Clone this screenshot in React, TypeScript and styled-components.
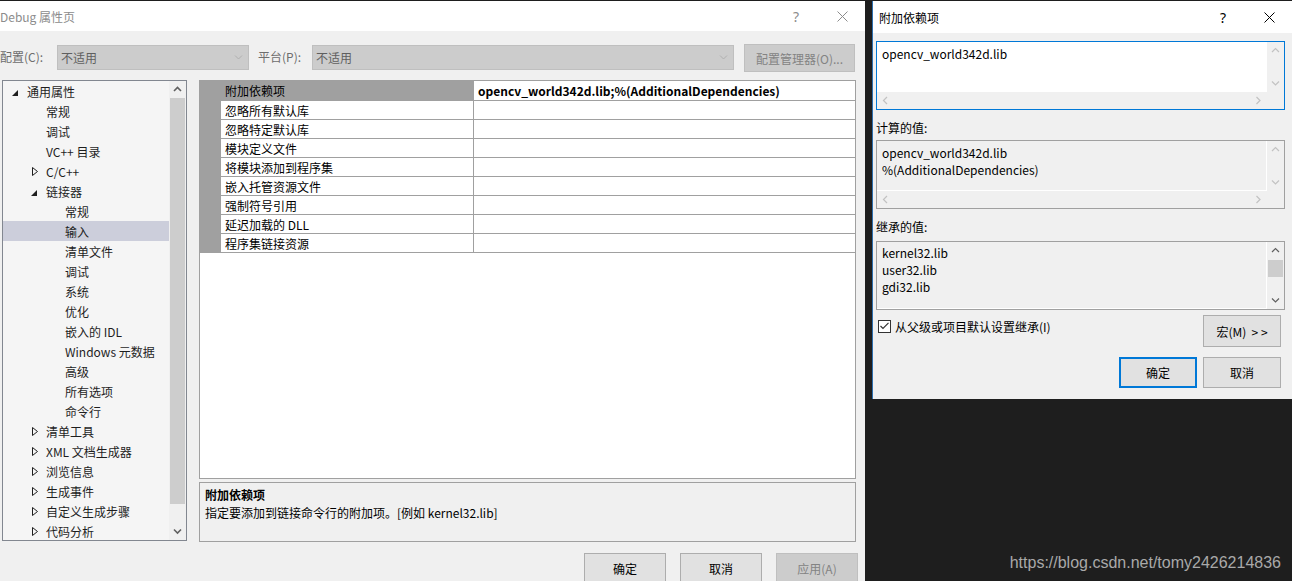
import React from "react";
import styled, { createGlobalStyle } from "styled-components";

const GlobalStyle = createGlobalStyle`
  html, body { margin: 0; padding: 0; background: #1e1e1e; }
  body {
    font-family: "Noto Sans CJK SC", "Noto Sans", sans-serif;
    font-size: 12px;
    color: #000;
  }
  * { box-sizing: border-box; }
`;

const Screen = styled.div`
  display: flex;
  gap: 7px;
  width: 1292px;
  height: 581px;
  overflow: hidden;
  background: #1e1e1e;
`;

/* ---------- shared window parts ---------- */

const TitleBar = styled.div<{ $active?: boolean; $h: number }>`
  flex: none;
  height: ${(p) => p.$h}px;
  background: #fff;
  display: flex;
  align-items: center;
  color: ${(p) => (p.$active ? "#000" : "#8c8c8c")};
`;

const TitleText = styled.div<{ $inset: number }>`
  flex: 1;
  padding-left: ${(p) => p.$inset}px;
  white-space: nowrap;
`;

const CaptionButton = styled.div`
  width: 46px;
  height: 100%;
  display: flex;
  align-items: center;
  justify-content: center;
  font-family: "Noto Sans", sans-serif;
  font-size: 14px;
`;

const PushButton = styled.div<{ $w: number; $h: number; $disabled?: boolean; $default?: boolean }>`
  flex: none;
  width: ${(p) => p.$w}px;
  height: ${(p) => p.$h}px;
  display: flex;
  align-items: center;
  justify-content: center;
  white-space: nowrap;
  background: ${(p) => (p.$disabled ? "#cccccc" : "#e1e1e1")};
  border: ${(p) => (p.$default ? "2px solid #0078d7" : p.$disabled ? "1px solid #bfbfbf" : "1px solid #adadad")};
  color: ${(p) => (p.$disabled ? "#838383" : "#000")};
`;

type Dir = "up" | "down" | "left" | "right";

const Chevron = ({ dir, color, w = 1.2 }: { dir: Dir; color: string; w?: number }) => {
  const vertical = dir === "up" || dir === "down";
  const pts = {
    up: "1,5 4.5,1.5 8,5",
    down: "1,1.5 4.5,5 8,1.5",
    left: "5,1 1.5,4.5 5,8",
    right: "1.5,1 5,4.5 1.5,8",
  }[dir];
  return (
    <svg width={vertical ? 9 : 7} height={vertical ? 7 : 9} viewBox={vertical ? "0 0 9 7" : "0 0 7 9"}>
      <polyline points={pts} fill="none" stroke={color} strokeWidth={w} />
    </svg>
  );
};

const CloseGlyph = ({ color }: { color: string }) => (
  <svg width="11" height="11" viewBox="0 0 11 11">
    <path d="M0.5 0.5 L10.5 10.5 M10.5 0.5 L0.5 10.5" stroke={color} strokeWidth="1" fill="none" />
  </svg>
);

/* ---------- left window ---------- */

const PropWindow = styled.div`
  flex: none;
  width: 865px;
  height: 580px;
  margin-top: 1px;
  background: #f0f0f0;
  display: flex;
  flex-direction: column;
`;

const Toolbar = styled.div`
  display: flex;
  align-items: flex-start;
  height: 28px;
  margin-top: 13px;
`;

const FieldLabel = styled.span<{ $w: number; $ml?: number }>`
  flex: none;
  width: ${(p) => p.$w}px;
  margin-left: ${(p) => p.$ml ?? 0}px;
  margin-top: 4px;
  line-height: 17px;
  color: #6d6d6d;
  white-space: nowrap;
`;

const Combo = styled.div<{ $w: number }>`
  flex: none;
  width: ${(p) => p.$w}px;
  height: 25px;
  margin-top: 1px;
  background: #cccccc;
  border: 1px solid #bfbfbf;
  display: flex;
  align-items: center;
  justify-content: space-between;
  padding: 0 5px 1px 3px;
  color: #5f5f5f;
`;

const ToolButton = styled(PushButton)`
  margin-left: 10px;
`;

const Main = styled.div`
  display: flex;
  align-items: flex-start;
  margin-top: 8px;
  padding-left: 2px;
`;

const Tree = styled.div`
  flex: none;
  width: 185px;
  height: 461px;
  border: 1px solid #828790;
  background: #f5f5f5;
  display: flex;
  overflow: hidden;
`;

const TreeList = styled.div`
  flex: 1;
  overflow: hidden;
`;

const TreeRow = styled.div<{ $level: number; $selected?: boolean }>`
  height: 20px;
  display: flex;
  align-items: center;
  padding-left: ${(p) => 8 + p.$level * 19}px;
  background: ${(p) => (p.$selected ? "#cccedb" : "transparent")};
  color: #1e1e1e;
  white-space: nowrap;
`;

const Expander = styled.span<{ $open?: boolean }>`
  flex: none;
  width: 16px;
  display: flex;
  align-items: center;
  padding-left: ${(p) => (p.$open ? 1 : 2)}px;
  padding-top: ${(p) => (p.$open ? 3 : 1)}px;
`;

const VScroll = styled.div`
  flex: none;
  width: 17px;
  background: #f0f0f0;
  display: flex;
  flex-direction: column;
`;

const ScrollArrow = styled.div<{ $h?: number }>`
  flex: none;
  height: ${(p) => p.$h ?? 17}px;
  display: flex;
  align-items: center;
  justify-content: center;
`;

const ScrollTrack = styled.div<{ $offset: number }>`
  flex: 1;
  padding-top: ${(p) => p.$offset}px;
`;

const Thumb = styled.div<{ $h: number }>`
  height: ${(p) => p.$h}px;
  margin: 0 1px;
  background: #cdcdcd;
`;

const RightPane = styled.div`
  flex: none;
  width: 657px;
  margin-left: 12px;
  display: flex;
  flex-direction: column;
`;

const Grid = styled.div`
  height: 399px;
  border: 1px solid #a0a0a0;
  background: #fff;
`;

const GridRow = styled.div<{ $h: number }>`
  display: grid;
  grid-template-columns: 21px 253px 1fr;
  height: ${(p) => p.$h}px;
`;

const Gutter = styled.div`
  background: #a0a0a0;
`;

const NameCell = styled.div<{ $selected?: boolean }>`
  display: flex;
  align-items: center;
  padding-left: 4px;
  background: ${(p) => (p.$selected ? "#a0a0a0" : "#fff")};
  border-bottom: 1px solid #a0a0a0;
  border-right: 1px solid #a0a0a0;
  white-space: nowrap;
`;

const ValueCell = styled.div`
  display: flex;
  align-items: center;
  padding-left: 4px;
  border-bottom: 1px solid #a0a0a0;
  font-weight: bold;
  white-space: nowrap;
`;

const Description = styled.div`
  margin-top: 3px;
  height: 60px;
  border: 1px solid #a0a0a0;
  background: #f0f0f0;
  padding: 3px 5px;
  line-height: 18px;
`;

const DescTitle = styled.div`
  font-weight: bold;
`;

const Footer = styled.div`
  display: flex;
  justify-content: flex-end;
  gap: 14px;
  margin-top: 11px;
  padding-right: 7px;
`;

/* ---------- right column / dialog ---------- */

const RightColumn = styled.div`
  flex: none;
  width: 420px;
  display: flex;
  flex-direction: column;
`;

const Dialog = styled.div`
  flex: none;
  height: 398px;
  margin-top: 1px;
  background: #f0f0f0;
  border-left: 1px solid #2d6fae;
  display: flex;
  flex-direction: column;
`;

const DialogBody = styled.div`
  display: flex;
  flex-direction: column;
  padding: 8px 7px 0 3px;
`;

const BoxLabel = styled.div<{ $mt: number }>`
  height: 16px;
  line-height: 16px;
  margin-top: ${(p) => p.$mt}px;
`;

const TextBox = styled.div<{ $focused?: boolean; $hscroll?: boolean; $mt?: number }>`
  flex: none;
  height: 69px;
  margin-top: ${(p) => p.$mt ?? 0}px;
  border: 1px solid ${(p) => (p.$focused ? "#0078d7" : "#a0a0a0")};
  display: grid;
  grid-template-columns: 1fr 17px;
  grid-template-rows: ${(p) => (p.$hscroll ? "1fr 17px" : "1fr")};
`;

const TextArea = styled.div<{ $white?: boolean; $pt: number }>`
  background: ${(p) => (p.$white ? "#fff" : "#f0f0f0")};
  border-right: 1px solid #fff;
  border-bottom: 1px solid #fff;
  padding: ${(p) => p.$pt}px 5px 0 5px;
  line-height: 17px;
  white-space: nowrap;
  overflow: hidden;
`;

const HScroll = styled.div`
  background: #f0f0f0;
  display: flex;
  align-items: center;
  justify-content: space-between;
`;

const HArrow = styled.div`
  width: 17px;
  display: flex;
  justify-content: center;
`;

const Corner = styled.div`
  background: #f0f0f0;
`;

const OptionsRow = styled.div`
  display: flex;
  justify-content: space-between;
  margin-top: 5px;
  padding: 0 4px 0 2px;
`;

const CheckLabel = styled.label`
  display: flex;
  align-items: center;
  gap: 4px;
  height: 12px;
  margin-top: 5px;
  white-space: nowrap;
`;

const CheckBox = styled.span`
  width: 13px;
  height: 13px;
  border: 1px solid #333;
  background: #fff;
  display: flex;
  align-items: center;
  justify-content: center;
`;

const ButtonRow = styled.div`
  display: flex;
  justify-content: flex-end;
  gap: 6px;
  margin-top: 10px;
  padding-right: 4px;
`;

const Backdrop = styled.div`
  flex: 1;
  display: flex;
  justify-content: flex-end;
  align-items: flex-end;
  padding: 0 11px 9px 0;
  font-family: "Liberation Sans", Arial, sans-serif;
  font-size: 16px;
  color: #a9a9a9;
`;

/* ---------- data ---------- */

type TreeItem = { label: string; level: number; exp?: "open" | "closed"; selected?: boolean };

const treeItems: TreeItem[] = [
  { label: "通用属性", level: 0, exp: "open" },
  { label: "常规", level: 1 },
  { label: "调试", level: 1 },
  { label: "VC++ 目录", level: 1 },
  { label: "C/C++", level: 1, exp: "closed" },
  { label: "链接器", level: 1, exp: "open" },
  { label: "常规", level: 2 },
  { label: "输入", level: 2, selected: true },
  { label: "清单文件", level: 2 },
  { label: "调试", level: 2 },
  { label: "系统", level: 2 },
  { label: "优化", level: 2 },
  { label: "嵌入的 IDL", level: 2 },
  { label: "Windows 元数据", level: 2 },
  { label: "高级", level: 2 },
  { label: "所有选项", level: 2 },
  { label: "命令行", level: 2 },
  { label: "清单工具", level: 1, exp: "closed" },
  { label: "XML 文档生成器", level: 1, exp: "closed" },
  { label: "浏览信息", level: 1, exp: "closed" },
  { label: "生成事件", level: 1, exp: "closed" },
  { label: "自定义生成步骤", level: 1, exp: "closed" },
  { label: "代码分析", level: 1, exp: "closed" },
];

const gridRows = [
  "附加依赖项",
  "忽略所有默认库",
  "忽略特定默认库",
  "模块定义文件",
  "将模块添加到程序集",
  "嵌入托管资源文件",
  "强制符号引用",
  "延迟加载的 DLL",
  "程序集链接资源",
];

const OpenTriangle = () => (
  <svg width="6" height="6" viewBox="0 0 6 6">
    <polygon points="6,0 6,6 0,6" fill="#1e1e1e" />
  </svg>
);

const ClosedTriangle = () => (
  <svg width="6" height="9" viewBox="0 0 6 9">
    <polygon points="0.5,0.5 5.5,4.5 0.5,8.5" fill="none" stroke="#1e1e1e" strokeWidth="1" />
  </svg>
);

const ScrollBox = ({
  lines,
  focused,
  white,
  mt,
}: {
  lines: string[];
  focused?: boolean;
  white?: boolean;
  mt?: number;
}) => (
  <TextBox $focused={focused} $hscroll $mt={mt}>
    <TextArea $white={white} $pt={3}>
      {lines.map((l, i) => (
        <div key={i}>{l}</div>
      ))}
    </TextArea>
    <VScroll>
      <ScrollArrow>
        <Chevron dir="up" color="#c2c2c2" />
      </ScrollArrow>
      <ScrollTrack $offset={0} />
      <ScrollArrow>
        <Chevron dir="down" color="#c2c2c2" />
      </ScrollArrow>
    </VScroll>
    <HScroll>
      <HArrow>
        <Chevron dir="left" color="#c2c2c2" />
      </HArrow>
      <HArrow>
        <Chevron dir="right" color="#c2c2c2" />
      </HArrow>
    </HScroll>
    <Corner />
  </TextBox>
);

export default function App() {
  return (
    <>
      <GlobalStyle />
      <Screen>
        <PropWindow>
          <TitleBar $h={30}>
            <TitleText $inset={0}>Debug 属性页</TitleText>
            <CaptionButton>?</CaptionButton>
            <CaptionButton>
              <CloseGlyph color="#8c8c8c" />
            </CaptionButton>
          </TitleBar>

          <Toolbar>
            <FieldLabel $w={57}>配置(C):</FieldLabel>
            <Combo $w={192}>
              <span>不适用</span>
              <Chevron dir="down" color="#b0b0b0" w={1} />
            </Combo>
            <FieldLabel $w={54} $ml={9}>
              平台(P):
            </FieldLabel>
            <Combo $w={422}>
              <span>不适用</span>
              <Chevron dir="down" color="#b0b0b0" w={1} />
            </Combo>
            <ToolButton $w={111} $h={28} $disabled>
              配置管理器(O)...
            </ToolButton>
          </Toolbar>

          <Main>
            <Tree>
              <TreeList>
                {treeItems.map((it, i) => (
                  <TreeRow key={i} $level={it.level} $selected={it.selected}>
                    <Expander $open={it.exp === "open"}>
                      {it.exp === "open" && <OpenTriangle />}
                      {it.exp === "closed" && <ClosedTriangle />}
                    </Expander>
                    <span>{it.label}</span>
                  </TreeRow>
                ))}
              </TreeList>
              <VScroll>
                <ScrollArrow>
                  <Chevron dir="up" color="#606060" w={1.6} />
                </ScrollArrow>
                <ScrollTrack $offset={0}>
                  <Thumb $h={406} />
                </ScrollTrack>
                <ScrollArrow>
                  <Chevron dir="down" color="#606060" w={1.6} />
                </ScrollArrow>
              </VScroll>
            </Tree>

            <RightPane>
              <Grid>
                {gridRows.map((name, i) => (
                  <GridRow key={i} $h={i === 0 ? 20 : 19}>
                    <Gutter />
                    <NameCell $selected={i === 0}>{name}</NameCell>
                    <ValueCell>{i === 0 ? "opencv_world342d.lib;%(AdditionalDependencies)" : ""}</ValueCell>
                  </GridRow>
                ))}
              </Grid>
              <Description>
                <DescTitle>附加依赖项</DescTitle>
                <div>指定要添加到链接命令行的附加项。[例如 kernel32.lib]</div>
              </Description>
            </RightPane>
          </Main>

          <Footer>
            <PushButton $w={82} $h={30}>
              确定
            </PushButton>
            <PushButton $w={82} $h={30}>
              取消
            </PushButton>
            <PushButton $w={82} $h={30} $disabled>
              应用(A)
            </PushButton>
          </Footer>
        </PropWindow>

        <RightColumn>
          <Dialog>
            <TitleBar $h={32} $active>
              <TitleText $inset={6}>附加依赖项</TitleText>
              <CaptionButton>?</CaptionButton>
              <CaptionButton>
                <CloseGlyph color="#000" />
              </CaptionButton>
            </TitleBar>
            <DialogBody>
              <ScrollBox lines={["opencv_world342d.lib"]} focused white />
              <BoxLabel $mt={10}>计算的值:</BoxLabel>
              <ScrollBox lines={["opencv_world342d.lib", "%(AdditionalDependencies)"]} mt={4} />
              <BoxLabel $mt={10}>继承的值:</BoxLabel>
              <TextBox $mt={6}>
                <TextArea $pt={2}>
                  <div>kernel32.lib</div>
                  <div>user32.lib</div>
                  <div>gdi32.lib</div>
                </TextArea>
                <VScroll>
                  <ScrollArrow>
                    <Chevron dir="up" color="#606060" />
                  </ScrollArrow>
                  <ScrollTrack $offset={1}>
                    <Thumb $h={17} />
                  </ScrollTrack>
                  <ScrollArrow>
                    <Chevron dir="down" color="#606060" />
                  </ScrollArrow>
                </VScroll>
              </TextBox>
              <OptionsRow>
                <CheckLabel>
                  <CheckBox>
                    <svg width="9" height="8" viewBox="0 0 9 8">
                      <polyline points="0.5,4 3,6.5 8.5,0.8" fill="none" stroke="#333" strokeWidth="1.2" />
                    </svg>
                  </CheckBox>
                  从父级或项目默认设置继承(I)
                </CheckLabel>
                <PushButton $w={78} $h={32}>
                  宏(M)&nbsp;&nbsp;&gt; &gt;
                </PushButton>
              </OptionsRow>
              <ButtonRow>
                <PushButton $w={78} $h={31} $default>
                  确定
                </PushButton>
                <PushButton $w={78} $h={31}>
                  取消
                </PushButton>
              </ButtonRow>
            </DialogBody>
          </Dialog>
          <Backdrop>https://blog.csdn.net/tomy2426214836</Backdrop>
        </RightColumn>
      </Screen>
    </>
  );
}
